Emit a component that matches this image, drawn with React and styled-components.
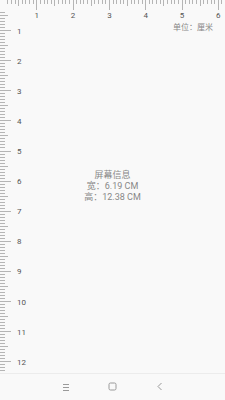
import styled, { createGlobalStyle } from "styled-components";

const CM_X = 36.3;
const CM_Y = 30.1;

const GlobalStyle = createGlobalStyle`
  html, body {
    margin: 0;
    padding: 0;
    background: #f9f9f9;
  }
  * {
    box-sizing: border-box;
  }
`;

function TopRuler() {
  const ticks = [];
  for (let i = 2; i <= 62; i++) {
    const x = Math.round(i * (CM_X / 10)) + 0.5;
    const len = i % 10 === 0 ? 10 : i % 5 === 0 ? 6 : 4;
    ticks.push(<line key={i} x1={x} y1={0} x2={x} y2={len} />);
  }
  const labels = [1, 2, 3, 4, 5, 6].map((n) => (
    <text key={n} x={n * CM_X + 0.5} y={18} textAnchor="middle">
      {n}
    </text>
  ));
  return (
    <RulerSvg width="225" height="22">
      <g stroke="#b5b5b5" strokeWidth="1">{ticks}</g>
      <g className="labels">{labels}</g>
    </RulerSvg>
  );
}

function LeftRuler() {
  const ticks = [];
  for (let i = 4; i <= 123; i++) {
    const y = Math.round(i * (CM_Y / 10)) + 0.5;
    const len = i % 10 === 0 ? 11 : i % 5 === 0 ? 8 : 5;
    ticks.push(<line key={i} x1={0} y1={y} x2={len} y2={y} />);
  }
  const labels = [];
  for (let n = 1; n <= 12; n++) {
    labels.push(
      <text key={n} x={17} y={n * CM_Y + 3.5}>
        {n}
      </text>
    );
  }
  return (
    <RulerSvg width="40" height="373">
      <g stroke="#b5b5b5" strokeWidth="1">{ticks}</g>
      <g className="labels">{labels}</g>
    </RulerSvg>
  );
}

function App() {
  return (
    <>
      <GlobalStyle />
      <Screen>
        <Canvas>
          <TopRuler />
          <LeftRuler />
          <Content>
            <UnitLabel>单位：厘米</UnitLabel>
            <InfoBlock>
              <InfoLine>屏幕信息</InfoLine>
              <InfoLine>宽：6.19 CM</InfoLine>
              <InfoLine>高：12.38 CM</InfoLine>
            </InfoBlock>
          </Content>
        </Canvas>
        <NavBar>
          <NavButton>
            <svg width="8" height="8" viewBox="0 0 8 8">
              <g stroke="#9a9a9a" strokeWidth="1">
                <line x1="1" y1="1.5" x2="7" y2="1.5" />
                <line x1="1" y1="4.5" x2="7" y2="4.5" />
                <line x1="1" y1="7.5" x2="7" y2="7.5" />
              </g>
            </svg>
          </NavButton>
          <NavButton>
            <svg width="9" height="9" viewBox="0 0 9 9">
              <rect
                x="1"
                y="1"
                width="7"
                height="7"
                rx="1.5"
                fill="none"
                stroke="#9a9a9a"
                strokeWidth="1"
              />
            </svg>
          </NavButton>
          <NavButton>
            <svg width="8" height="9" viewBox="0 0 8 9">
              <polyline
                points="5.5,1 2,4.5 5.5,8"
                fill="none"
                stroke="#9a9a9a"
                strokeWidth="1"
              />
            </svg>
          </NavButton>
        </NavBar>
      </Screen>
    </>
  );
}

const Screen = styled.div`
  width: 225px;
  height: 400px;
  display: flex;
  flex-direction: column;
  background: #f9f9f9;
  font-family: "Roboto", "Noto Sans CJK SC", sans-serif;
  overflow: hidden;
`;

const Canvas = styled.div`
  flex: 1;
  display: grid;
  grid-template: 1fr / 1fr;
  border-bottom: 1px solid #ececec;

  & > * {
    grid-area: 1 / 1;
  }
`;

const RulerSvg = styled.svg`
  display: block;

  .labels text {
    font-family: "Roboto", sans-serif;
    font-size: 8px;
    fill: #555;
  }
`;

const Content = styled.div`
  display: flex;
  flex-direction: column;
  align-items: center;
`;

const UnitLabel = styled.div`
  align-self: flex-end;
  margin-top: 22px;
  margin-right: 12px;
  font-size: 8px;
  line-height: 12px;
  color: #888;
  font-family: "Roboto", "Noto Sans CJK SC", sans-serif;
`;

const InfoBlock = styled.div`
  margin-top: 136px;
  display: flex;
  flex-direction: column;
  align-items: center;
`;

const InfoLine = styled.div`
  font-size: 9px;
  line-height: 11px;
  color: #888;
  font-family: "Roboto", "Noto Sans CJK SC", sans-serif;
`;

const NavBar = styled.div`
  height: 27px;
  display: flex;
  justify-content: center;
  align-items: center;
  gap: 38px;
  padding-bottom: 1px;
`;

const NavButton = styled.div`
  width: 9px;
  display: flex;
  justify-content: center;
  align-items: center;
`;

export default App;
